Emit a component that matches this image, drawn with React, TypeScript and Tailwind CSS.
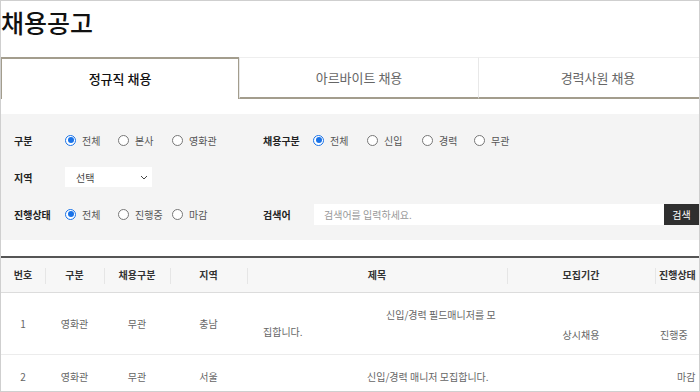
import { useState } from 'react'

const font = { fontFamily: '"Noto Sans CJK KR", "Noto Sans", sans-serif' }

function Radio({ label, checked, w }: { label: string; checked?: boolean; w: string }) {
  return (
    <label className={`flex items-center gap-[6px] ${w}`}>
      {checked ? (
        <span className="flex h-[11px] w-[11px] items-center justify-center rounded-full border border-[#1a73e8] bg-white">
          <span className="h-[6px] w-[6px] rounded-full bg-[#1a73e8]" />
        </span>
      ) : (
        <span className="h-[11px] w-[11px] rounded-full border border-[#777] bg-white" />
      )}
      <span className="text-[10px] text-[#555]">{label}</span>
    </label>
  )
}

const tabs = ['정규직 채용', '아르바이트 채용', '경력사원 채용']

export default function App() {
  const [tab, setTab] = useState(0)

  return (
    <div className="h-[392px] w-[700px] overflow-hidden border border-[#cfcfcf] bg-white" style={font}>
      <div className="w-[717px]">
        <h1 className="h-[56px] pt-[4px] text-[25px] font-medium leading-[35px] text-[#111]">채용공고</h1>

        {/* tabs */}
        <div className="flex">
          {tabs.map((t, i) => (
            <button
              key={t}
              onClick={() => setTab(i)}
              className={
                i === tab
                  ? 'h-[42px] w-[238px] border-x border-t-2 border-[#a39d8d] text-[13px] font-medium text-[#111]'
                  : 'h-[42px] w-[239px] border-b-2 border-l border-t border-b-[#a39d8d] border-l-[#e8e8e8] border-t-[#eeeeee] text-[13px] text-[#666] first:border-l-0'
              }
            >
              {t}
            </button>
          ))}
        </div>

        {/* filter */}
        <div className="mt-[15px] flex flex-col gap-[15px] bg-[#f4f4f4] py-[15px] pl-[13px] text-[10px]">
          <div className="flex h-[22px] items-center">
            <span className="w-[51px] font-bold text-[#222]">구분</span>
            <Radio label="전체" checked w="w-[53px]" />
            <Radio label="본사" w="w-[54px]" />
            <Radio label="영화관" w="w-[91px]" />
            <span className="w-[50px] font-bold text-[#222]">채용구분</span>
            <Radio label="전체" checked w="w-[54px]" />
            <Radio label="신입" w="w-[55px]" />
            <Radio label="경력" w="w-[52px]" />
            <Radio label="무관" w="w-[54px]" />
          </div>
          <div className="flex h-[22px] items-center">
            <span className="w-[51px] font-bold text-[#222]">지역</span>
            <div className="flex h-[20px] w-[87px] items-center justify-between bg-white pl-[11px] pr-[4px] text-[#444]">
              <span>선택</span>
              <svg width="8" height="5" viewBox="0 0 8 5" fill="none" stroke="#444" strokeWidth="1">
                <path d="M1 1l3 3 3-3" />
              </svg>
            </div>
          </div>
          <div className="flex h-[22px] items-center">
            <span className="w-[51px] font-bold text-[#222]">진행상태</span>
            <Radio label="전체" checked w="w-[53px]" />
            <Radio label="진행중" w="w-[54px]" />
            <Radio label="마감" w="w-[91px]" />
            <span className="w-[51px] font-bold text-[#222]">검색어</span>
            <div className="flex h-[21px] w-[350px] items-center bg-white pl-[10px] text-[#999]">검색어를 입력하세요.</div>
            <button className="h-[21px] w-[35px] bg-[#2f2f2f] text-[10px] text-white">검색</button>
          </div>
        </div>

        {/* table */}
        <table className="mt-[16px] w-[717px] table-fixed border-collapse text-[10px]">
          <colgroup>
            <col className="w-[44px]" />
            <col className="w-[59px]" />
            <col className="w-[66px]" />
            <col className="w-[77px]" />
            <col className="w-[260px]" />
            <col className="w-[148px]" />
            <col className="w-[63px]" />
          </colgroup>
          <thead>
            <tr className="h-[35px] border-t-2 border-b border-t-[#555] border-b-[#dcdcdc] bg-[#f7f7f7] font-bold text-[#333]">
              {['번호', '구분', '채용구분', '지역', '제목', '모집기간', '진행상태'].map((h, i) => (
                <th
                  key={h}
                  className={`relative whitespace-nowrap ${i > 0 ? "before:absolute before:left-0 before:top-[10px] before:h-[16px] before:w-px before:bg-[#e6e6e6] before:content-['']" : ''} ${i === 6 ? 'text-left pl-[4px]' : ''}`}
                >
                  {h}
                </th>
              ))}
            </tr>
          </thead>
          <tbody className="text-[#666]">
            <tr className="h-[62px] border-b border-[#ececec] text-center">
              <td>1</td>
              <td>영화관</td>
              <td>무관</td>
              <td>충남</td>
              <td className="pl-[16px] text-left leading-[17px] indent-[123px]">
                신입/경력 필드매니저를 모<br />집합니다.
              </td>
              <td className="pt-[22px]">상시채용</td>
              <td className="whitespace-nowrap pt-[22px] text-left pl-[5px]">진행중</td>
            </tr>
            <tr className="h-[44px] text-center">
              <td>2</td>
              <td>영화관</td>
              <td>무관</td>
              <td>서울</td>
              <td className="pl-[16px] text-left indent-[104px]">신입/경력 매니저 모집합니다.</td>
              <td></td>
              <td className="text-left pl-[22px]">마감</td>
            </tr>
          </tbody>
        </table>
      </div>
    </div>
  )
}
